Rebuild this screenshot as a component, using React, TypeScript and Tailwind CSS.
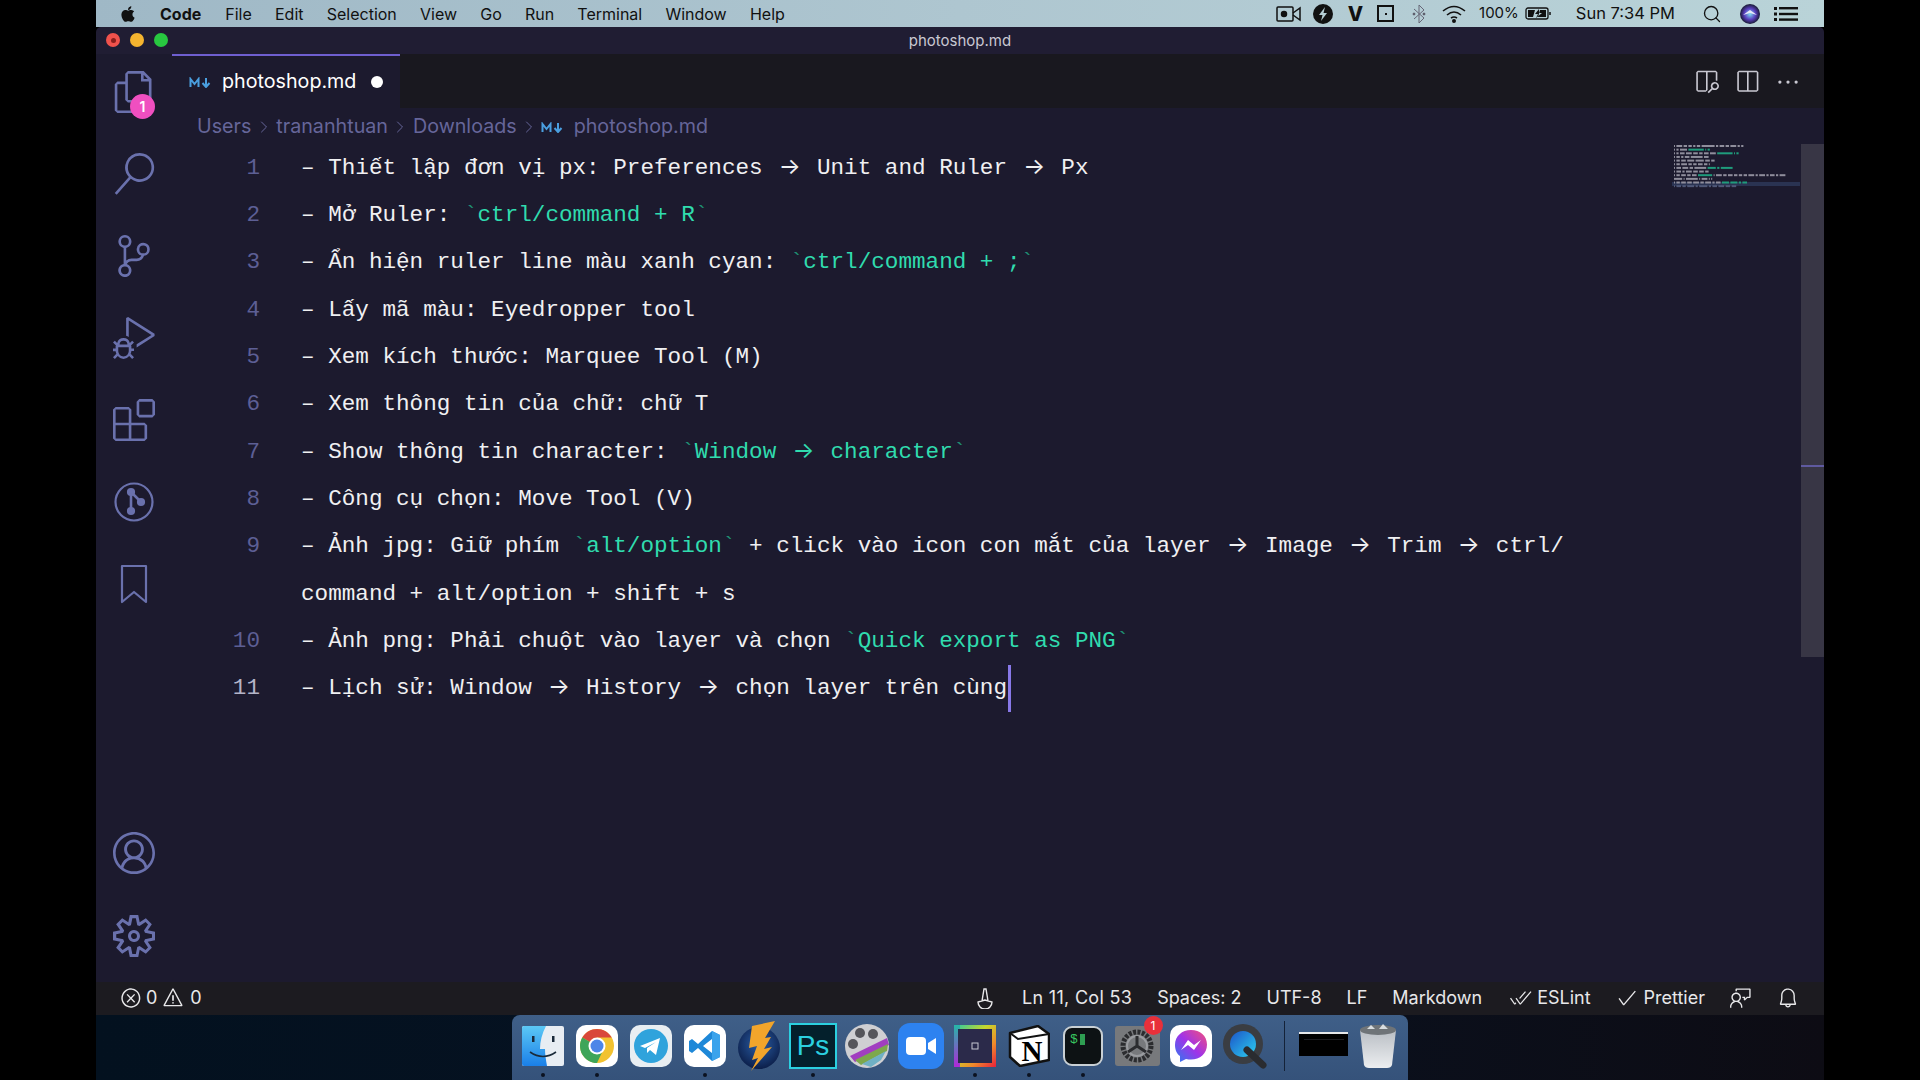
import { Fragment, type ReactNode } from 'react'
import { FaApple } from 'react-icons/fa'
import { ChevronRight, Search } from 'lucide-react'
import {
  VscAccount,
  VscBell,
  VscCheck,
  VscCheckAll,
  VscDebugAlt,
  VscEllipsis,
  VscError,
  VscExtensions,
  VscFeedback,
  VscFiles,
  VscOpenPreview,
  VscSearch,
  VscSettingsGear,
  VscSourceControl,
  VscSplitHorizontal,
  VscWarning,
} from 'react-icons/vsc'

const MENU = ['File', 'Edit', 'Selection', 'View', 'Go', 'Run', 'Terminal', 'Window', 'Help']

const LINES: { no?: number; text: string }[] = [
  { no: 1, text: '– Thiết lập đơn vị px: Preferences → Unit and Ruler → Px' },
  { no: 2, text: '– Mở Ruler: `ctrl/command + R`' },
  { no: 3, text: '– Ẩn hiện ruler line màu xanh cyan: `ctrl/command + ;`' },
  { no: 4, text: '– Lấy mã màu: Eyedropper tool' },
  { no: 5, text: '– Xem kích thước: Marquee Tool (M)' },
  { no: 6, text: '– Xem thông tin của chữ: chữ T' },
  { no: 7, text: '– Show thông tin character: `Window → character`' },
  { no: 8, text: '– Công cụ chọn: Move Tool (V)' },
  { no: 9, text: '– Ảnh jpg: Giữ phím `alt/option` + click vào icon con mắt của layer → Image → Trim → ctrl/' },
  { text: 'command + alt/option + shift + s' },
  { no: 10, text: '– Ảnh png: Phải chuột vào layer và chọn `Quick export as PNG`' },
  { no: 11, text: '– Lịch sử: Window → History → chọn layer trên cùng' },
]

function Arrows({ text }: { text: string }) {
  const parts = text.normalize('NFC').split('→')
  return (
    <>
      {parts.map((p, i) => (
        <Fragment key={i}>
          {i > 0 && (
            <span className="inline-block w-[27.16px] text-center font-['Inter',sans-serif] text-[23px] leading-none">
              →
            </span>
          )}
          {p}
        </Fragment>
      ))}
    </>
  )
}

function CodeLine({ text }: { text: string }) {
  const parts = text.split('`')
  return (
    <>
      {parts.map((p, i) =>
        i % 2 === 1 ? (
          <span key={i} className="text-[#30dcae]">
            <span className="text-[#1f8f73]">`</span>
            <Arrows text={p} />
            <span className="text-[#1f8f73]">`</span>
          </span>
        ) : (
          <Arrows key={i} text={p} />
        ),
      )}
    </>
  )
}

function Minimap() {
  return (
    <svg width="128" height="46" viewBox="0 0 128 46" className="absolute left-[1500px] top-[89px]">
      <rect x="0" y="39" width="128" height="4" fill="#2a3352" />
      {LINES.map((line, row) => {
        let col = 0
        let inCode = false
        const out: ReactNode[] = []
        line.text
          .replace(/→/g, '->')
          .split(' ')
          .forEach((word, j) => {
            if (word.startsWith('`')) inCode = true
            out.push(
              <rect
                key={j}
                x={2 + col * 1.2}
                y={2 + row * 3.65}
                width={Math.max(word.length * 1.2 - 0.2, 1)}
                height="2"
                fill={inCode ? '#1f9c7c' : row === 11 ? '#4f5878' : '#8f8e9c'}
              />,
            )
            if (word.endsWith('`')) inCode = false
            col += word.length + 1
          })
        return <g key={row}>{out}</g>
      })}
    </svg>
  )
}

/* activity bar icons */
const stroke = {
  fill: 'none',
  stroke: '#6a71ad',
  strokeWidth: 2.2,
  strokeLinecap: 'round' as const,
  strokeLinejoin: 'round' as const,
}

function Act({ children, className = '' }: { children: ReactNode; className?: string }) {
  return <div className={`relative flex size-[40px] items-center justify-center text-[#6a71ad] ${className}`}>{children}</div>
}

function LensIcon() {
  return (
    <svg width="40" height="40" viewBox="0 0 40 40" {...stroke}>
      <circle cx="20" cy="20" r="18.5" />
      <path d="M17 10 v20 M17 10 L26 19" strokeWidth="2.6" />
      <circle cx="17" cy="10" r="3" fill="#6a71ad" />
      <circle cx="17" cy="29" r="3" fill="#6a71ad" />
      <circle cx="27" cy="20" r="3" fill="#6a71ad" />
    </svg>
  )
}
function BookmarkIcon() {
  return (
    <svg width="40" height="40" viewBox="0 0 40 40" {...stroke}>
      <path d="M8 2 h24 v36 L20 28 8 38 z" />
    </svg>
  )
}

function MdMark({ className }: { className: string }) {
  return (
    <svg width="22" height="11" viewBox="0 0 22 11" className={className} fill="none" stroke="#4a9fe0" strokeWidth="2">
      <path d="M1.5 10 V2 l4 5 4 -5 v8" />
      <path d="M17 1 v8 M13.5 6 l3.5 4 3.5 -4" />
    </svg>
  )
}

/* dock icons */
function Finder() {
  return (
    <svg width="42" height="40" viewBox="0 0 42 40">
      <defs>
        <linearGradient id="fin" x1="0" y1="0" x2="0" y2="1">
          <stop offset="0" stopColor="#5cc8f5" />
          <stop offset="1" stopColor="#1a7fe8" />
        </linearGradient>
      </defs>
      <rect width="42" height="40" rx="2" fill="#e8edf3" />
      <path d="M2 0 h22 c-4 8 -6 15 -6 23 h5 c0 6 1 11 2 17 h-23 a2 2 0 0 1 -2 -2 v-36 a2 2 0 0 1 2 -2 z" fill="url(#fin)" />
      <rect x="10" y="10" width="2.5" height="6" fill="#1b2a3a" />
      <rect x="30" y="10" width="2.5" height="6" fill="#1b2a3a" />
      <path d="M8 26 q13 9 26 0" fill="none" stroke="#1b2a3a" strokeWidth="1.6" />
    </svg>
  )
}
function Chrome() {
  return (
    <div className="flex size-[42px] items-center justify-center rounded-[10px] bg-white">
      <svg width="36" height="36" viewBox="0 0 36 36">
        <circle cx="18" cy="18" r="17" fill="#f2c230" />
        <path d="M18 18 L3.3 9.5 A17 17 0 0 1 32.7 9.5 L18 9.5 z" fill="#d9483b" />
        <path d="M3.3 9.5 A17 17 0 0 0 18 35 L26 18 L18 18 z" fill="#3ea559" />
        <circle cx="18" cy="18" r="8.5" fill="#fff" />
        <circle cx="18" cy="18" r="6.5" fill="#4d86e8" />
      </svg>
    </div>
  )
}
function Telegram() {
  return (
    <div className="flex size-[42px] items-center justify-center rounded-[10px] bg-[#e8eef2]">
      <svg width="36" height="36" viewBox="0 0 36 36">
        <circle cx="18" cy="18" r="17" fill="#2fa3dc" />
        <path d="M7 18 L27 10 L23 27 L17 22 L14 25 L14 20 L23 14 L12 20 z" fill="#fff" />
      </svg>
    </div>
  )
}
function VsCode() {
  return (
    <div className="flex size-[42px] items-center justify-center rounded-[10px] bg-white">
      <svg width="32" height="32" viewBox="0 0 32 32">
        <path d="M23 1 L31 5 V27 L23 31 L9 18 L3 23 L0 21 V11 L3 9 L9 14 z M23 9 L14 16 L23 23 z" fill="#1e88d8" fillRule="evenodd" />
        <path d="M23 1 L31 5 V27 L23 31 z" fill="#3aa3ec" />
      </svg>
    </div>
  )
}
function Bolt() {
  return (
    <svg width="44" height="52" viewBox="0 0 44 52">
      <defs>
        <radialGradient id="sph" cx="0.5" cy="0.4" r="0.6">
          <stop offset="0" stopColor="#2a5fa8" />
          <stop offset="1" stopColor="#0c1f4a" />
        </radialGradient>
      </defs>
      <circle cx="22" cy="28" r="21" fill="url(#sph)" />
      <path d="M38 1 L15 6 L12 28 L20 26 L15 40 L21 38 L14 51 L35 27 L27 29 L34 17 L28 18 z" fill="#f2a52b" />
    </svg>
  )
}
function Photoshop() {
  return (
    <div className="flex h-[46px] w-[48px] items-center justify-center border-2 border-[#2bd0e0] bg-[#04202c] font-['Liberation_Sans',sans-serif] text-[28px] text-[#2bd0e0]">
      Ps
    </div>
  )
}
function Reel() {
  return (
    <svg width="46" height="46" viewBox="0 0 46 46">
      <circle cx="23" cy="23" r="22" fill="#cfcfd2" />
      <circle cx="16" cy="10" r="5" fill="#55555a" />
      <circle cx="29" cy="11" r="5" fill="#55555a" />
      <circle cx="9" cy="21" r="5" fill="#55555a" />
      <path d="M6 33 L43 15 L45 22 L11 39 z" fill="#a13ec0" />
      <path d="M11 37 L44 21 L43 28 L17 42 z" fill="#7da84c" />
      <path d="M18 41 L42 28 L37 37 L27 44 z" fill="#6fb0c4" />
    </svg>
  )
}
function Zoom() {
  return (
    <div className="flex size-[46px] items-center justify-center rounded-[12px] bg-[#2d82f0]">
      <svg width="30" height="18" viewBox="0 0 30 18">
        <rect width="20" height="18" rx="4" fill="#fff" />
        <path d="M22 6 L30 1 V17 L22 12 z" fill="#fff" />
      </svg>
    </div>
  )
}
function Rainbow() {
  return (
    <svg width="42" height="42" viewBox="0 0 42 42">
      <defs>
        <linearGradient id="rb" x1="0" y1="0" x2="1" y2="1">
          <stop offset="0" stopColor="#25c8a8" />
          <stop offset="0.4" stopColor="#c6d82c" />
          <stop offset="0.7" stopColor="#f08a2a" />
          <stop offset="1" stopColor="#e8203c" />
        </linearGradient>
        <linearGradient id="rb2" x1="0" y1="0" x2="0" y2="1">
          <stop offset="0" stopColor="#25b8a8" />
          <stop offset="1" stopColor="#b028d8" />
        </linearGradient>
      </defs>
      <rect width="42" height="42" fill="url(#rb)" />
      <rect width="6" height="42" fill="url(#rb2)" />
      <rect x="4" y="4" width="34" height="34" fill="#2b2a4a" />
      <rect x="18" y="18" width="6" height="6" fill="none" stroke="#c8c8d4" strokeWidth="1" />
    </svg>
  )
}
function Notion() {
  return (
    <svg width="42" height="42" viewBox="0 0 42 42">
      <path d="M2 8 L30 1 L41 9 V35 L12 41 L2 32 z" fill="#fff" stroke="#111" strokeWidth="2.5" strokeLinejoin="round" />
      <path d="M2 8 L10 14 L41 9" fill="none" stroke="#111" strokeWidth="2" />
      <text x="24" y="36" textAnchor="middle" fontFamily="'Liberation Serif', serif" fontWeight="700" fontSize="29" fill="#000">
        N
      </text>
    </svg>
  )
}
function TerminalApp() {
  return (
    <div className="flex size-[40px] items-start gap-[2px] rounded-[9px] border-2 border-[#c9d0d4] bg-[#0d1214] p-[5px] font-['Liberation_Mono',monospace] text-[13px] leading-[14px] text-[#38c860]">
      $<span className="mt-[1px] block h-[11px] w-[5px] bg-[#2e9e52]" />
    </div>
  )
}
function Prefs() {
  return (
    <div className="relative">
      <div className="flex h-[40px] w-[45px] items-center justify-center rounded-[3px] bg-[#77797c]">
        <svg width="36" height="36" viewBox="0 0 36 36" fill="none">
          <circle cx="18" cy="18" r="14" stroke="#2b2c2f" strokeWidth="5" strokeDasharray="3 1.4" />
          <circle cx="18" cy="18" r="10" stroke="#9a9ca0" strokeWidth="2" />
          <path d="M18 18 V8 M18 18 L9 24 M18 18 L27 24" stroke="#2b2c2f" strokeWidth="3" />
        </svg>
      </div>
      <span className="absolute right-[-3px] top-[-10px] flex size-[19px] items-center justify-center rounded-full bg-[#e8303a] text-[12px] leading-none text-white">
        1
      </span>
    </div>
  )
}
function Messenger() {
  return (
    <div className="flex size-[42px] items-center justify-center rounded-[10px] bg-white">
      <svg width="34" height="34" viewBox="0 0 34 34">
        <defs>
          <linearGradient id="ms" x1="0" y1="1" x2="1" y2="0">
            <stop offset="0" stopColor="#2a7cf0" />
            <stop offset="0.5" stopColor="#a033e8" />
            <stop offset="1" stopColor="#f5507a" />
          </linearGradient>
        </defs>
        <path d="M17 1 C8 1 1 7 1 16 c0 5 2 9 5 11 v6 l6 -3 c2 0.5 3 0.6 5 0.6 c9 0 16 -6 16 -15 S26 1 17 1 z" fill="url(#ms)" />
        <path d="M7 21 L14 11 L20 16 L27 11 L20 21 L14 16 z" fill="#fff" />
      </svg>
    </div>
  )
}
function QuickTime() {
  return (
    <svg width="46" height="46" viewBox="0 0 46 46">
      <defs>
        <linearGradient id="qt" x1="0" y1="0" x2="1" y2="1">
          <stop offset="0" stopColor="#1c54c8" />
          <stop offset="1" stopColor="#2cd0f0" />
        </linearGradient>
      </defs>
      <circle cx="21" cy="21" r="20" fill="#3a3d42" />
      <circle cx="21" cy="21" r="13" fill="url(#qt)" />
      <path d="M25 27 L41 42" stroke="#2a2c30" strokeWidth="7" strokeLinecap="round" />
    </svg>
  )
}
function WindowThumb() {
  return (
    <div className="h-[24px] w-[49px] border-t-2 border-[#e6e8ea] bg-black">
      <div className="mt-[5px] ml-[5px] h-[1px] w-[40px] bg-[#1c1c20]" />
    </div>
  )
}
function Trash() {
  return (
    <svg width="38" height="46" viewBox="0 0 38 46">
      <defs>
        <linearGradient id="tr" x1="0" y1="0" x2="0" y2="1">
          <stop offset="0" stopColor="#b9bec4" />
          <stop offset="1" stopColor="#eceef0" />
        </linearGradient>
      </defs>
      <path d="M1 7 L5 42 q1 3 5 3 h18 q4 0 5 -3 L37 7 z" fill="url(#tr)" />
      <ellipse cx="19" cy="7" rx="18" ry="5" fill="#6f7478" />
      <path d="M8 6 l4 -4 4 4 z M20 6 l4 -5 5 5 z" fill="#d8dde0" />
    </svg>
  )
}

const DOCK = [
  { key: 'finder', el: <Finder />, dot: true },
  { key: 'chrome', el: <Chrome />, dot: true },
  { key: 'telegram', el: <Telegram />, dot: false },
  { key: 'vscode', el: <VsCode />, dot: true },
  { key: 'bolt', el: <Bolt />, dot: false },
  { key: 'ps', el: <Photoshop />, dot: true },
  { key: 'reel', el: <Reel />, dot: false },
  { key: 'zoom', el: <Zoom />, dot: false },
  { key: 'rainbow', el: <Rainbow />, dot: true },
  { key: 'notion', el: <Notion />, dot: true },
  { key: 'term', el: <TerminalApp />, dot: true },
  { key: 'prefs', el: <Prefs />, dot: false },
  { key: 'messenger', el: <Messenger />, dot: false },
  { key: 'qt', el: <QuickTime />, dot: false },
]

export default function App() {
  return (
    <div className="flex h-[1080px] w-[1920px] overflow-hidden bg-black font-['Inter','Liberation_Sans',sans-serif]">
      <div className="w-[96px] shrink-0 bg-black" />

      <div className="flex w-[1728px] shrink-0 flex-col">
        {/* menu bar */}
        <div className="flex h-[27px] shrink-0 items-center bg-gradient-to-r from-[#9fb8c6] via-[#aec6d0] to-[#b9d3d8] text-[16px] text-[#111]">
          <FaApple className="ml-[23px] text-[18px] text-[#111]" />
          <span className="ml-[23px] font-bold">Code</span>
          <div className="ml-[24px] flex gap-[23.2px]">
            {MENU.map(m => (
              <span key={m}>{m}</span>
            ))}
          </div>
          <div className="ml-auto flex items-center">
            <svg width="25" height="18" viewBox="0 0 25 18" fill="none" stroke="#111" strokeWidth="1.5" className="mr-[12.5px]">
              <rect x="1" y="2" width="16" height="14" rx="1" />
              <circle cx="8" cy="9" r="2.5" fill="#111" />
              <path d="M17 8 L24 3 V15 L17 10" />
            </svg>
            <svg width="20" height="20" viewBox="0 0 20 20" className="mr-[14.5px]">
              <circle cx="10" cy="10" r="10" fill="#111" />
              <path d="M12 3 L6 11 H9.5 L8 17 L14 9 H10.5 z" fill="#b5ced4" />
            </svg>
            <span className="mr-[14px] text-[20px] font-extrabold leading-none">V</span>
            <div className="mr-[18px] flex size-[17px] items-center justify-center border-2 border-[#111]">
              <span className="size-[2px] bg-[#111]" />
            </div>
            <svg width="14" height="20" viewBox="0 0 14 20" fill="none" stroke="#667" strokeWidth="1" className="mr-[16px]">
              <path d="M2 5 L12 14 L7 19 V1 L12 6 L2 15" />
              <circle cx="2" cy="10" r="1" fill="#222" />
              <circle cx="12" cy="10" r="1" fill="#222" />
            </svg>
            <svg width="24" height="18" viewBox="0 0 24 18" fill="none" stroke="#111" strokeWidth="1.6" className="mr-[13px]">
              <path d="M1 6 Q12 -3 23 6 M5 10 Q12 4 19 10 M9 13 Q12 11 15 13" />
              <circle cx="12" cy="16" r="1.2" fill="#111" />
            </svg>
            <span className="text-[15px]">100%</span>
            <svg width="27" height="13" viewBox="0 0 27 13" className="ml-[6px] mr-[24px]" fill="none" stroke="#111" strokeWidth="1.3">
              <rect x="1" y="1" width="22" height="11" rx="2" />
              <path d="M3 3 H10 L8 10 H3 z M14 2 L10 7 H13 L11 11 L17 6 H14 z M15 3 H21 V10 H13 z" fill="#111" stroke="none" />
              <path d="M25 5 V8" strokeWidth="1.5" />
            </svg>
            <span className="mr-[27px] text-[16.5px]">Sun 7:34 PM</span>
            <Search size={20} strokeWidth={1.6} color="#111" className="mr-[18px]" />
            <svg width="20" height="20" viewBox="0 0 20 20" className="mr-[14px]">
              <defs>
                <radialGradient id="siri" cx="0.5" cy="0.5" r="0.5">
                  <stop offset="0" stopColor="#7fe0f0" />
                  <stop offset="0.55" stopColor="#5a3fc0" />
                  <stop offset="1" stopColor="#181a34" />
                </radialGradient>
              </defs>
              <circle cx="10" cy="10" r="10" fill="url(#siri)" />
              <path d="M3 11 L10 6 L17 11 L10 9 z" fill="#e8e8f8" />
            </svg>
            <svg width="24" height="14" viewBox="0 0 24 14" fill="#111" className="mr-[26px]">
              <rect x="0" y="0" width="3" height="3" />
              <rect x="5" y="0" width="19" height="2.4" />
              <rect x="0" y="5.5" width="3" height="3" />
              <rect x="5" y="5.8" width="19" height="2.4" />
              <rect x="0" y="11" width="3" height="3" />
              <rect x="5" y="11.4" width="19" height="2.4" />
            </svg>
          </div>
        </div>

        {/* title bar */}
        <div className="relative flex h-[27px] shrink-0 items-center justify-center rounded-t-[5px] bg-[#201d33] pt-[1px] text-[15px] text-[#c9c8d2]">
          <div className="absolute left-[10px] top-[6px] flex gap-[10px]">
            <span className="flex size-[14px] items-center justify-center rounded-full bg-[#f0524c]">
              <span className="size-[5px] rounded-full bg-[#8a1f1c]" />
            </span>
            <span className="size-[14px] rounded-full bg-[#f5b42f]" />
            <span className="size-[14px] rounded-full bg-[#28c840]" />
          </div>
          photoshop.md
        </div>

        {/* window body */}
        <div className="flex h-[928px] shrink-0 bg-[#1c1a2e]">
          <div className="flex w-[76px] shrink-0 flex-col items-center justify-between pb-[26px] pt-[18px]">
            <div className="flex flex-col items-center gap-[42px]">
              <Act>
                <VscFiles size={42} className="shrink-0" />
                <span className="absolute left-[16px] top-[22px] flex size-[25px] items-center justify-center rounded-full bg-[#f04fc0] text-[14px] font-semibold text-white">
                  1
                </span>
              </Act>
              <Act>
                <VscSearch size={42} className="shrink-0" />
              </Act>
              <Act>
                <VscSourceControl size={42} className="shrink-0" />
              </Act>
              <Act>
                <VscDebugAlt size={42} className="shrink-0" />
              </Act>
              <Act>
                <VscExtensions size={42} className="shrink-0" />
              </Act>
              <Act>
                <LensIcon />
              </Act>
              <Act>
                <BookmarkIcon />
              </Act>
            </div>
            <div className="flex flex-col items-center gap-[43px]">
              <Act>
                <VscAccount size={42} className="shrink-0" />
              </Act>
              <Act>
                <VscSettingsGear size={42} className="shrink-0" />
              </Act>
            </div>
          </div>

          <div className="relative flex min-w-0 flex-1 flex-col">
            {/* tabs */}
            <div className="flex h-[54px] shrink-0 bg-[#19181f]">
              <div className="flex w-[228px] items-center border-t-2 border-[#6f5fd0] bg-[#1c1a2e] pl-[17px] text-[19.7px] text-white">
                <MdMark className="mr-[11px]" />
                photoshop.md
                <span className="ml-[15px] size-[12px] rounded-full bg-white" />
              </div>
              <div className="ml-auto flex items-center gap-[15px] pr-[23px] pt-[2px] text-[#c9c8d2]">
                <VscOpenPreview size={26} />
                <VscSplitHorizontal size={26} />
                <VscEllipsis size={26} />
              </div>
            </div>

            {/* breadcrumbs */}
            <div className="flex h-[37px] shrink-0 items-center pl-[25px] pt-[1px] text-[19.7px] text-[#66669a]">
              <span>Users</span>
              <ChevronRight size={20} strokeWidth={1.2} className="mx-[2.5px]" />
              <span>trananhtuan</span>
              <ChevronRight size={20} strokeWidth={1.2} className="mx-[2.5px]" />
              <span>Downloads</span>
              <ChevronRight size={20} strokeWidth={1.2} className="mx-[2px]" />
              <MdMark className="mr-[11px]" />
              <span>photoshop.md</span>
            </div>

            {/* editor */}
            <div className="font-['Liberation_Mono',monospace] text-[22.63px]">
              {LINES.map((line, i) => (
                <div key={i} className="flex h-[47.35px] items-center">
                  <span className={`w-[88px] shrink-0 text-right ${line.no === 11 ? 'text-[#b4b4c8]' : 'text-[#5d5f95]'}`}>
                    {line.no}
                  </span>
                  <span className="ml-[41px] whitespace-pre text-[#f0f0f2]">
                    <CodeLine text={line.text} />
                    {line.no === 11 && (
                      <span className="relative inline-block h-[24px] w-0 align-middle">
                        <span className="absolute left-[1px] top-[-12px] h-[47px] w-[3px] bg-[#8878e8]" />
                      </span>
                    )}
                  </span>
                </div>
              ))}
            </div>

            {/* minimap and scrollbar */}
            <Minimap />
            <div className="absolute left-[1629px] top-[90px] h-[513px] w-[23px] bg-[#383645]">
              <div className="mt-[321px] h-[2px] w-full bg-[#5f5aa0]" />
            </div>
          </div>
        </div>

        {/* status bar */}
        <div className="flex h-[33px] shrink-0 items-center bg-[#1c1b20] pb-[2px] pl-[24px] pr-[25px] text-[18px] text-[#e8e8ea]">
          <VscError size={22} />
          <span className="ml-[4px]">0</span>
          <VscWarning size={22} className="ml-[5px]" />
          <span className="ml-[6px]">0</span>
          <div className="ml-auto flex items-center gap-[25px]">
            <svg width="18" height="22" viewBox="0 0 18 22" fill="none" stroke="#e8e8ea" strokeWidth="1.4" className="mr-[3px]">
              <path d="M9 13 L2 15 a7 7 0 0 0 14 0 z M6 14 L8 2 h2 l2 12" />
            </svg>
            <span className="tracking-[0.3px]">Ln 11, Col 53</span>
            <span>Spaces: 2</span>
            <span>UTF-8</span>
            <span>LF</span>
            <span className="mr-[3px]">Markdown</span>
            <span className="flex items-center gap-[5px]">
              <VscCheckAll size={22} />
              ESLint
            </span>
            <span className="flex items-center gap-[6px]">
              <VscCheck size={22} />
              Prettier
            </span>
            <VscFeedback size={22} />
            <VscBell size={22} />
          </div>
        </div>

        {/* wallpaper and dock */}
        <div className="flex h-[65px] shrink-0 justify-center bg-gradient-to-r from-[#03111f] via-[#071222] to-[#0d0c14]">
          <div className="flex h-[65px] w-[896px] items-start rounded-t-[8px] bg-gradient-to-b from-[#3f5f88] to-[#35527a] pl-[4px] pt-[6px]">
            {DOCK.map(d => (
              <div key={d.key} className="relative flex h-[50px] w-[54px] shrink-0 items-center justify-center">
                {d.el}
                {d.dot && <span className="absolute bottom-[-6px] size-[4px] rounded-full bg-[#0b1220]" />}
              </div>
            ))}
            <div className="ml-[12px] h-[50px] w-px bg-[#142238]" />
            <div className="ml-[14px] flex h-[46px] items-center">
              <WindowThumb />
            </div>
            <div className="ml-[11px] flex h-[50px] items-center">
              <Trash />
            </div>
          </div>
        </div>
      </div>

      <div className="flex-1 bg-black" />
    </div>
  )
}
